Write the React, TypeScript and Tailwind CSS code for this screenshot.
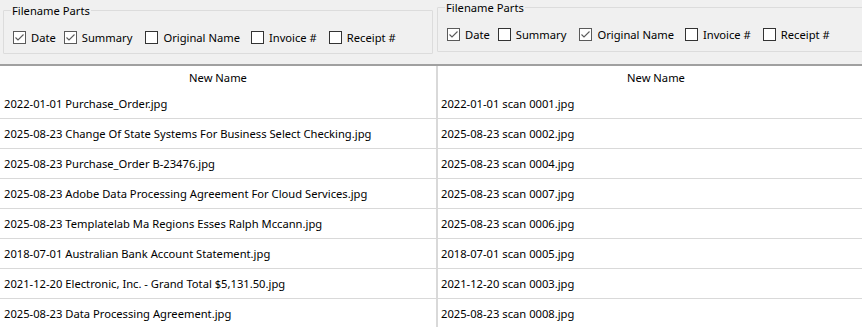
import React from "react";

const leftRows = [
  "2022-01-01 Purchase_Order.jpg",
  "2025-08-23 Change Of State Systems For Business Select Checking.jpg",
  "2025-08-23 Purchase_Order B-23476.jpg",
  "2025-08-23 Adobe Data Processing Agreement For Cloud Services.jpg",
  "2025-08-23 Templatelab Ma Regions Esses Ralph Mccann.jpg",
  "2018-07-01 Australian Bank Account Statement.jpg",
  "2021-12-20 Electronic, Inc. - Grand Total $5,131.50.jpg",
  "2025-08-23 Data Processing Agreement.jpg",
];

const rightRows = [
  "2022-01-01 scan 0001.jpg",
  "2025-08-23 scan 0002.jpg",
  "2025-08-23 scan 0004.jpg",
  "2025-08-23 scan 0007.jpg",
  "2025-08-23 scan 0006.jpg",
  "2018-07-01 scan 0005.jpg",
  "2021-12-20 scan 0003.jpg",
  "2025-08-23 scan 0008.jpg",
];

function Check({ checked, label, mr }: { checked: boolean; label: string; mr: string }) {
  return (
    <div className={`flex items-center ${mr}`}>
      <div
        className={`w-[13px] h-[13px] shrink-0 bg-white border flex items-center justify-center ${
          checked ? "border-[#5a5a5a]" : "border-[#333333]"
        }`}
      >
        {checked && (
          <svg width="11" height="11" viewBox="0 0 11 11">
            <path d="M1.5 5.5 L4 8 L9.5 2.5" fill="none" stroke="#5a5a5a" strokeWidth="1.1" />
          </svg>
        )}
      </div>
      <span className="ml-[5px] leading-none">{label}</span>
    </div>
  );
}

function GroupBox({ children, className }: { children: React.ReactNode; className: string }) {
  return (
    <div className={`relative border border-[#dcdcdc] rounded-[1px] ${className}`}>
      <span className="absolute left-[7px] top-[-8px] bg-[#f0f0f0] px-[1px] leading-[16px] whitespace-nowrap">
        Filename Parts
      </span>
      {children}
    </div>
  );
}

export default function App() {
  const checksLeft = [true, true, false, false, false];
  const checksRight = [true, false, true, false, false];
  const labels = ["Date", "Summary", "Original Name", "Invoice #", "Receipt #"];
  const mrs = ["mr-[8px]", "mr-[13px]", "mr-[11px]", "mr-[12px]", "mr-0"];
  return (
    <div
      className="w-[862px] h-[327px] overflow-hidden bg-[#f0f0f0] text-black text-[11.2px] flex flex-col"
      style={{ fontFamily: '"Noto Sans", "Open Sans", sans-serif' }}
    >
      <div className="h-[66px] shrink-0 flex border-b-2 border-[#a0a0a0]">
        <div className="w-[437px] shrink-0 pl-[3px] pt-[10px]">
          <GroupBox className="w-[430px] h-[44px]">
            <div className="flex items-center pl-[9px] pt-[20px]">
              {labels.map((l, i) => (
                <Check key={l} checked={checksLeft[i]} label={l} mr={mrs[i]} />
              ))}
            </div>
          </GroupBox>
        </div>
        <div className="flex-1 pt-[7px]">
          <GroupBox className="w-[440px] h-[45px]">
            <div className="flex items-center pl-[9px] pt-[20px]">
              {labels.map((l, i) => (
                <Check key={l} checked={checksRight[i]} label={l} mr={mrs[i]} />
              ))}
            </div>
          </GroupBox>
        </div>
      </div>
      <div className="flex flex-1 bg-white">
        <div className="w-[436px] shrink-0">
          <div className="h-[23px] flex items-center justify-center pt-[2px]">New Name</div>
          {leftRows.map((r) => (
            <div
              key={r}
              className="h-[30px] border-b border-[#d9d9d9] flex items-center pl-[4px] pt-[2px] whitespace-nowrap"
            >
              {r}
            </div>
          ))}
        </div>
        <div className="w-[2px] shrink-0 bg-[#d9d9d9]" />
        <div className="flex-1 min-w-0">
          <div className="h-[23px] flex items-center w-[436px] justify-center pt-[2px]">New Name</div>
          {rightRows.map((r) => (
            <div
              key={r}
              className="h-[30px] border-b border-[#d9d9d9] flex items-center pl-[3px] pt-[2px] whitespace-nowrap"
            >
              {r}
            </div>
          ))}
        </div>
      </div>
    </div>
  );
}
